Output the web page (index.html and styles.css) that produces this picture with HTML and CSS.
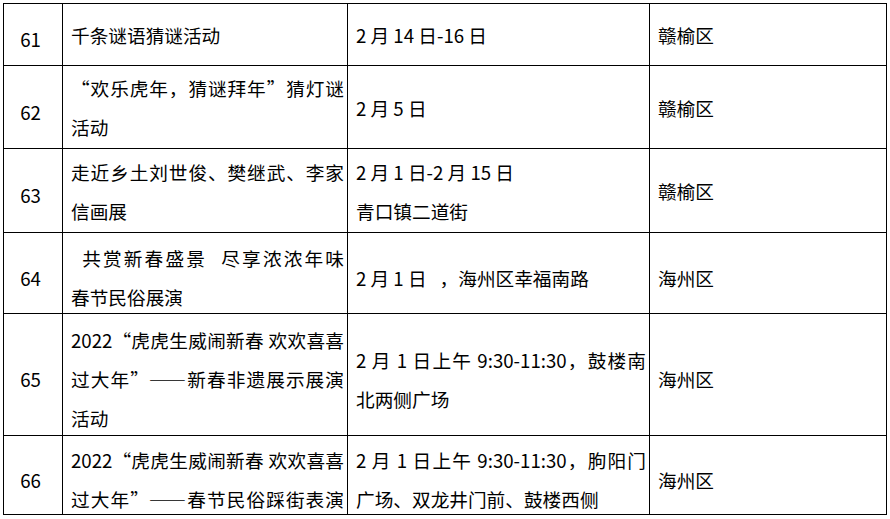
FILE: index.html
```html
<!DOCTYPE html>
<html lang="zh-CN">
<head>
<meta charset="utf-8">
<title>活动列表</title>
<link rel="stylesheet" href="styles.css">
</head>
<body>
<table class="events">
  <colgroup>
    <col class="c-num">
    <col class="c-name">
    <col class="c-time">
    <col class="c-area">
  </colgroup>
  <tbody>
    <tr class="r1">
      <td class="num"><div class="tx">61</div></td>
      <td><div class="tx">千条谜语猜谜活动</div></td>
      <td><div class="tx">2 月 14 日-16 日</div></td>
      <td><div class="tx">赣榆区</div></td>
    </tr>
    <tr class="r2">
      <td class="num"><div class="tx">62</div></td>
      <td><div class="tx"><span class="j">“欢乐虎年，猜谜拜年”猜灯谜</span>活动</div></td>
      <td><div class="tx">2 月 5 日</div></td>
      <td><div class="tx">赣榆区</div></td>
    </tr>
    <tr class="r3">
      <td class="num"><div class="tx">63</div></td>
      <td><div class="tx"><span class="j">走近乡土刘世俊、樊继武、李家</span>信画展</div></td>
      <td><div class="tx">2 月 1 日-2 月 15 日<br>青口镇二道街</div></td>
      <td><div class="tx">赣榆区</div></td>
    </tr>
    <tr class="r4">
      <td class="num"><div class="tx">64</div></td>
      <td><div class="tx"><span class="j"><span class="sp"></span>共赏新春盛景<span class="sp2"></span>尽享浓浓年味</span>春节民俗展演</div></td>
      <td><div class="tx">2 月 1 日<span class="sp3"></span>，海州区幸福南路</div></td>
      <td><div class="tx">海州区</div></td>
    </tr>
    <tr class="r5">
      <td class="num"><div class="tx">65</div></td>
      <td><div class="tx"><span class="j">2022“虎虎生威闹新春 欢欢喜喜</span><span class="j">过大年”——新春非遗展示展演</span>活动</div></td>
      <td><div class="tx"><span class="j">2 月 1 日上午 9:30-11:30，鼓楼南</span>北两侧广场</div></td>
      <td><div class="tx">海州区</div></td>
    </tr>
    <tr class="r6">
      <td class="num"><div class="tx">66</div></td>
      <td><div class="tx"><span class="j">2022“虎虎生威闹新春 欢欢喜喜</span><span class="j">过大年”——春节民俗踩街表演</span></div></td>
      <td><div class="tx"><span class="j">2 月 1 日上午 9:30-11:30，朐阳门</span>广场、双龙井门前、鼓楼西侧</div></td>
      <td><div class="tx">海州区</div></td>
    </tr>
  </tbody>
</table>
</body>
</html>
```

FILE: styles.css
```css
html, body {
  margin: 0;
  padding: 0;
  background: #fff;
}

.events {
  margin: 3px 0 0 3px;
  border-collapse: collapse;
  table-layout: fixed;
  width: 883px;
  font-family: "Noto Sans CJK SC", "Noto Sans", sans-serif;
  font-size: 18.67px;
  line-height: 39px;
  color: #000;
}

.c-num { width: 59px; }
.c-name { width: 285px; }
.c-time { width: 302px; }
.c-area { width: 237px; }

.events td {
  border: 1px solid #000;
  padding: 0 3px 0 8px;
  vertical-align: middle;
  white-space: nowrap;
}

.events td.num {
  text-align: center;
  padding-left: 0;
  padding-right: 5px;
}

.r1 { height: 62px; }
.r2 { height: 83px; }
.r3 { height: 84px; }
.r4 { height: 81px; }
.r5 { height: 122px; }
.r6 { height: 79px; }

/* text block: a negative bottom margin lets the lines sit a little low,
   as in the source document, without growing the row */
.tx {
  margin-bottom: 0;
}

.num .tx,
.r4 .tx,
.r5 .tx,
.r6 .tx {
  margin-bottom: -8px;
}

/* a wrapped line that is stretched to the full cell width */
.j {
  display: block;
  text-align: justify;
  text-align-last: justify;
}

.sp {
  display: inline-block;
  width: 9px;
}

.sp2 {
  display: inline-block;
  width: 12px;
}

.sp3 {
  display: inline-block;
  width: 13px;
}
```
